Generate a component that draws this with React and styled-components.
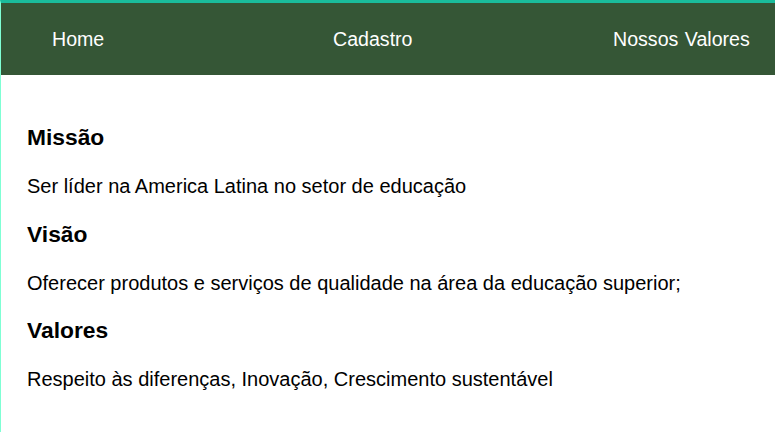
import React from "react";
import styled, { createGlobalStyle } from "styled-components";

const Global = createGlobalStyle`
  html, body { margin: 0; padding: 0; background: #ffffff; }
  body {
    font-family: "Liberation Sans", Arial, sans-serif;
    color: #000000;
    min-height: 432px;
    box-sizing: border-box;
    border-left: 1px solid #7fffd4;
    border-top: 3px solid #1abc9c;
  }
  * { box-sizing: border-box; }
`;

const Nav = styled.nav`
  height: 72px;
  background: #355636;
  display: flex;
  align-items: center;
`;

const NavList = styled.ul`
  list-style: none;
  margin: 0;
  padding: 0 0 0 51px;
  display: grid;
  grid-template-columns: 281px 280px auto;
  width: 100%;
`;

const NavLink = styled.a`
  color: #ffffff;
  text-decoration: none;
  font-size: 19.6px;
  line-height: 22px;
  word-spacing: 1px;
`;

const Content = styled.main`
  padding: 49px 26px 0 26px;
`;

const Title = styled.h3`
  margin: 0 0 25px 0;
  font-size: 22.8px;
  line-height: 26px;
  font-weight: 700;
`;

const Text = styled.p`
  margin: 0 0 22.5px 0;
  font-size: 20px;
  line-height: 23px;
`;

const items = [
  { title: "Missão", text: "Ser líder na America Latina no setor de educação" },
  { title: "Visão", text: "Oferecer produtos e serviços de qualidade na área da educação superior;" },
  { title: "Valores", text: "Respeito às diferenças, Inovação, Crescimento sustentável" },
];

export default function App() {
  return (
    <>
      <Global />
      <Nav>
        <NavList>
          <li><NavLink href="#">Home</NavLink></li>
          <li><NavLink href="#">Cadastro</NavLink></li>
          <li><NavLink href="#">Nossos Valores</NavLink></li>
        </NavList>
      </Nav>
      <Content>
        {items.map((it) => (
          <section key={it.title}>
            <Title>{it.title}</Title>
            <Text>{it.text}</Text>
          </section>
        ))}
      </Content>
    </>
  );
}
